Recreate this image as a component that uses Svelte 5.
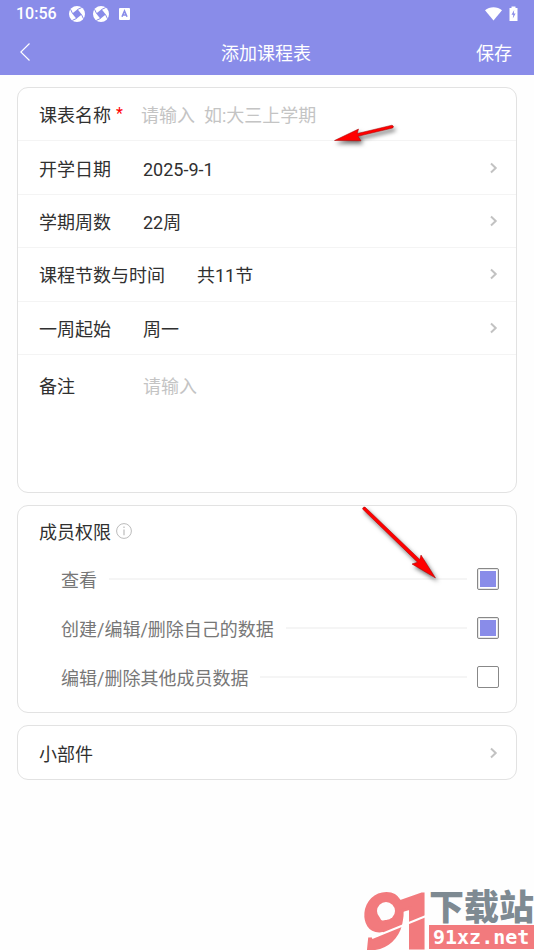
<script>
  let name = ''
  let remark = ''

  const pickers = [
    { label: '开学日期', value: '2025-9-1' },
    { label: '学期周数', value: '22周' },
    { label: '课程节数与时间', value: '共11节' },
    { label: '一周起始', value: '周一' },
  ]

  let permissions = [
    { id: 'view', label: '查看', checked: true },
    { id: 'own', label: '创建/编辑/删除自己的数据', checked: true },
    { id: 'others', label: '编辑/删除其他成员数据', checked: false },
  ]
</script>

<style>
  :global(body) {
    background: #fefefe;
  }

  .page {
    position: relative;
    min-height: 100vh;
    overflow: hidden;
    font-family: Roboto, "Noto Sans CJK SC", sans-serif;
    font-size: 18px;
    line-height: 24px;
    color: #303030;
  }

  button, input, textarea {
    font: inherit;
    color: inherit;
    background: none;
    border: 0;
    padding: 0;
    margin: 0;
    outline: 0;
    border-radius: 0;
  }

  button {
    cursor: pointer;
    text-align: left;
  }

  svg {
    display: block;
    flex: none;
  }

  header {
    background: #898ce9;
    color: #fff;
    height: 75px;
  }

  .status {
    display: flex;
    align-items: center;
    height: 28px;
    padding: 0 16px;
    font-size: 16px;
    font-weight: 500;
  }

  .status .icons {
    display: flex;
    align-items: center;
    gap: 8px;
    flex: 1;
    padding-left: 12px;
  }

  .status .letter {
    margin-left: 2px;
  }

  .nav {
    display: grid;
    grid-template-columns: 1fr auto 1fr;
    align-items: center;
    height: 47px;
    padding: 0 22px 0 20px;
  }

  .nav h1 {
    margin: 0;
    padding-top: 4px;
    font-size: 18px;
    font-weight: 400;
  }

  .save {
    justify-self: end;
    padding-top: 4px;
  }

  main {
    display: flex;
    flex-direction: column;
    gap: 12px;
    padding: 12px 17px;
  }

  .card {
    border: 1px solid #e2e2e2;
    border-radius: 11px;
    background: #fff;
  }

  .rows {
    display: grid;
    grid-template-rows: repeat(5, 1fr);
    height: 267px;
  }

  .row {
    display: flex;
    align-items: center;
    width: 100%;
    padding: 0 18px 0 21px;
    border-bottom: 1px solid #f4f4f4;
    box-sizing: border-box;
  }

  .row label, .row span, .row input {
    padding-top: 4px;
  }

  .row .value {
    flex: 1;
    padding-left: 32px;
  }

  .row .required {
    width: 30px;
    padding: 0 0 0 5px;
    box-sizing: border-box;
    font-size: 16px;
    color: #f00;
  }

  .row input {
    flex: 1;
    min-width: 0;
  }

  input::placeholder, textarea::placeholder {
    color: #c4c4c4;
    opacity: 1;
  }

  .remark {
    display: flex;
    padding: 20px 18px 0 21px;
    height: 117px;
  }

  .remark label {
    width: 104px;
  }

  .remark textarea {
    flex: 1;
    height: 96px;
    resize: none;
  }

  .members {
    padding: 13px 17px 11px 21px;
  }

  .members h2 {
    display: flex;
    align-items: center;
    gap: 5px;
    margin: 0 0 9px;
    font-size: 18px;
    font-weight: 400;
  }

  .members h2 span {
    padding-top: 2px;
  }

  .members h2 svg {
    margin-bottom: 2px;
  }

  .permission {
    display: flex;
    align-items: center;
    height: 49px;
    padding-left: 22px;
    color: #777;
  }

  .permission label {
    padding-top: 4px;
  }

  .permission .line {
    flex: 1;
    height: 2px;
    margin: 0 10px 0 12px;
    background: #f5f5f5;
  }

  .permission input {
    appearance: none;
    width: 22px;
    height: 22px;
    padding: 2px;
    border: 1px solid #888;
    border-radius: 2px;
    background: #fff;
    background-clip: content-box;
  }

  .permission input:checked {
    background-color: #898ce9;
    box-shadow: inset 0 0 0 1px #e8e8e8;
  }

  .card .single {
    height: 53px;
    border: 0;
  }

  .single .value {
    padding-left: 0;
  }

  .chevron {
    fill: none;
    stroke: #c2c2c2;
    stroke-width: 2;
  }

  .arrow {
    position: absolute;
    pointer-events: none;
    fill: #f00;
    stroke: #a00000;
    stroke-width: 0.5;
    filter: drop-shadow(2px 3px 2px rgba(0, 0, 0, 0.55));
  }

  .arrow-name {
    top: 120px;
    left: 330px;
  }

  .arrow-check {
    top: 503px;
    left: 358px;
  }

  .watermark {
    position: absolute;
    right: 0;
    bottom: 0;
    overflow: visible;
    pointer-events: none;
  }

  .watermark .digits {
    font-family: Roboto, sans-serif;
    font-size: 76px;
    font-weight: 900;
    fill: #f27a7d;
    stroke: #f27a7d;
    stroke-width: 3;
  }

  .watermark .nine {
    font-style: italic;
  }

  .watermark .site {
    font-family: "Noto Sans CJK SC", sans-serif;
    font-size: 35px;
    font-weight: 900;
    fill: #7e8a92;
  }

  .watermark .domain {
    font-family: "DejaVu Sans Mono", monospace;
    font-size: 20px;
    font-weight: 700;
    fill: #fff;
  }
</style>

{#snippet chevron()}
  <svg class="chevron" width="8" height="12" viewBox="0 0 8 12">
    <path d="M1 1.5 5.7 6 1 10.5" />
  </svg>
{/snippet}

{#snippet swirl()}
  <svg width="16" height="16" viewBox="0 0 16 16">
    <circle cx="8" cy="8" r="8" fill="#fff" />
    <path d="M8.6 3.2 12.8 8.6 7.4 12.8 3.2 7.4Z" fill="#898ce9" />
    <path d="M3.6 7.6 1.6 3.4M8.4 3.6 12.6 1.6M12.4 8.4 14.4 12.6M7.6 12.4 3.4 14.4" stroke="#898ce9" />
    <path d="M8.4 5.2 10.8 8.4 7.6 10.8 5.2 7.6Z" fill="#898ce9" />
  </svg>
{/snippet}

<div class="page">
  <header>
    <div class="status">
      <span>10:56</span>
      <div class="icons">
        {@render swirl()}
        {@render swirl()}
        <svg class="letter" width="11" height="12" viewBox="0 0 11 12">
          <rect width="11" height="12" rx="1" fill="#fff" />
          <path d="M3 8.8 5.5 3 8 8.8M4 7H7" fill="none" stroke="#898ce9" stroke-width="1.6" />
        </svg>
      </div>
      <svg width="33" height="16" viewBox="0 0 33 16">
        <path d="M0 4.2C4.5.3 12.5.3 17 4.2L8.5 14.5Z" fill="#fff" />
        <path d="M24.5 2h2V.5h4V2h2v13h-8Z" fill="#fff" />
        <path d="M29.2 4 26.5 8.7h1.8L27.8 12.5 30.6 7.5h-1.8Z" fill="#898ce9" />
      </svg>
    </div>
    <div class="nav">
      <button aria-label="返回">
        <svg width="12" height="20" viewBox="0 0 12 20" fill="none" stroke="#fff" stroke-width="1.2">
          <path d="M9.5 1.5.8 10 9.5 18.5" />
        </svg>
      </button>
      <h1>添加课程表</h1>
      <button class="save">保存</button>
    </div>
  </header>

  <main>
    <section class="card">
      <div class="rows">
        <div class="row">
          <label for="name">课表名称</label>
          <span class="required">*</span>
          <input id="name" type="text" placeholder="请输入&nbsp; 如:大三上学期" bind:value={name} />
        </div>
        {#each pickers as picker}
          <button class="row">
            <span>{picker.label}</span>
            <span class="value">{picker.value}</span>
            {@render chevron()}
          </button>
        {/each}
      </div>
      <div class="remark">
        <label for="remark">备注</label>
        <textarea id="remark" placeholder="请输入" bind:value={remark}></textarea>
      </div>
    </section>

    <section class="card members">
      <h2>
        <span>成员权限</span>
        <svg width="16" height="16" viewBox="0 0 16 16" fill="none" stroke="#bbb">
          <circle cx="8" cy="8" r="7.4" />
          <path d="M8 3.4V5M8 6.5V12.3" stroke-width="1.2" />
        </svg>
      </h2>
      {#each permissions as permission}
        <div class="permission">
          <label for={permission.id}>{permission.label}</label>
          <span class="line"></span>
          <input id={permission.id} type="checkbox" bind:checked={permission.checked} />
        </div>
      {/each}
    </section>

    <section class="card">
      <button class="row single">
        <span class="value">小部件</span>
        {@render chevron()}
      </button>
    </section>
  </main>

  <svg class="arrow arrow-name" width="72" height="34" viewBox="0 0 72 34">
    <path d="M4.5 20.5 28.5 9 27.3 13.5 62 5.2Q64.5 6 62.7 8L28 16.3 31 20.8Z" />
  </svg>
  <svg class="arrow arrow-check" width="86" height="84" viewBox="0 0 86 84">
    <path d="M77.5 75 54 61 59.5 59.2 4.5 6Q5 3.5 7 4L61.8 56.5 63 52Z" />
  </svg>

  <svg class="watermark" width="170" height="60" viewBox="0 0 170 60">
    <text class="digits" y="58"><tspan class="nine" x="-3">9</tspan><tspan x="28">1</tspan></text>
    <circle cx="22" cy="21" r="9" fill="#fefefe" />
    <path d="M8 48 62 26" stroke="#fff" stroke-width="2" />
    <text class="site" x="65" y="30">下载站</text>
    <rect x="65" y="35" width="105" height="24" fill="#f27a7d" />
    <text class="domain" x="69" y="54">91xz.net</text>
  </svg>
</div>
